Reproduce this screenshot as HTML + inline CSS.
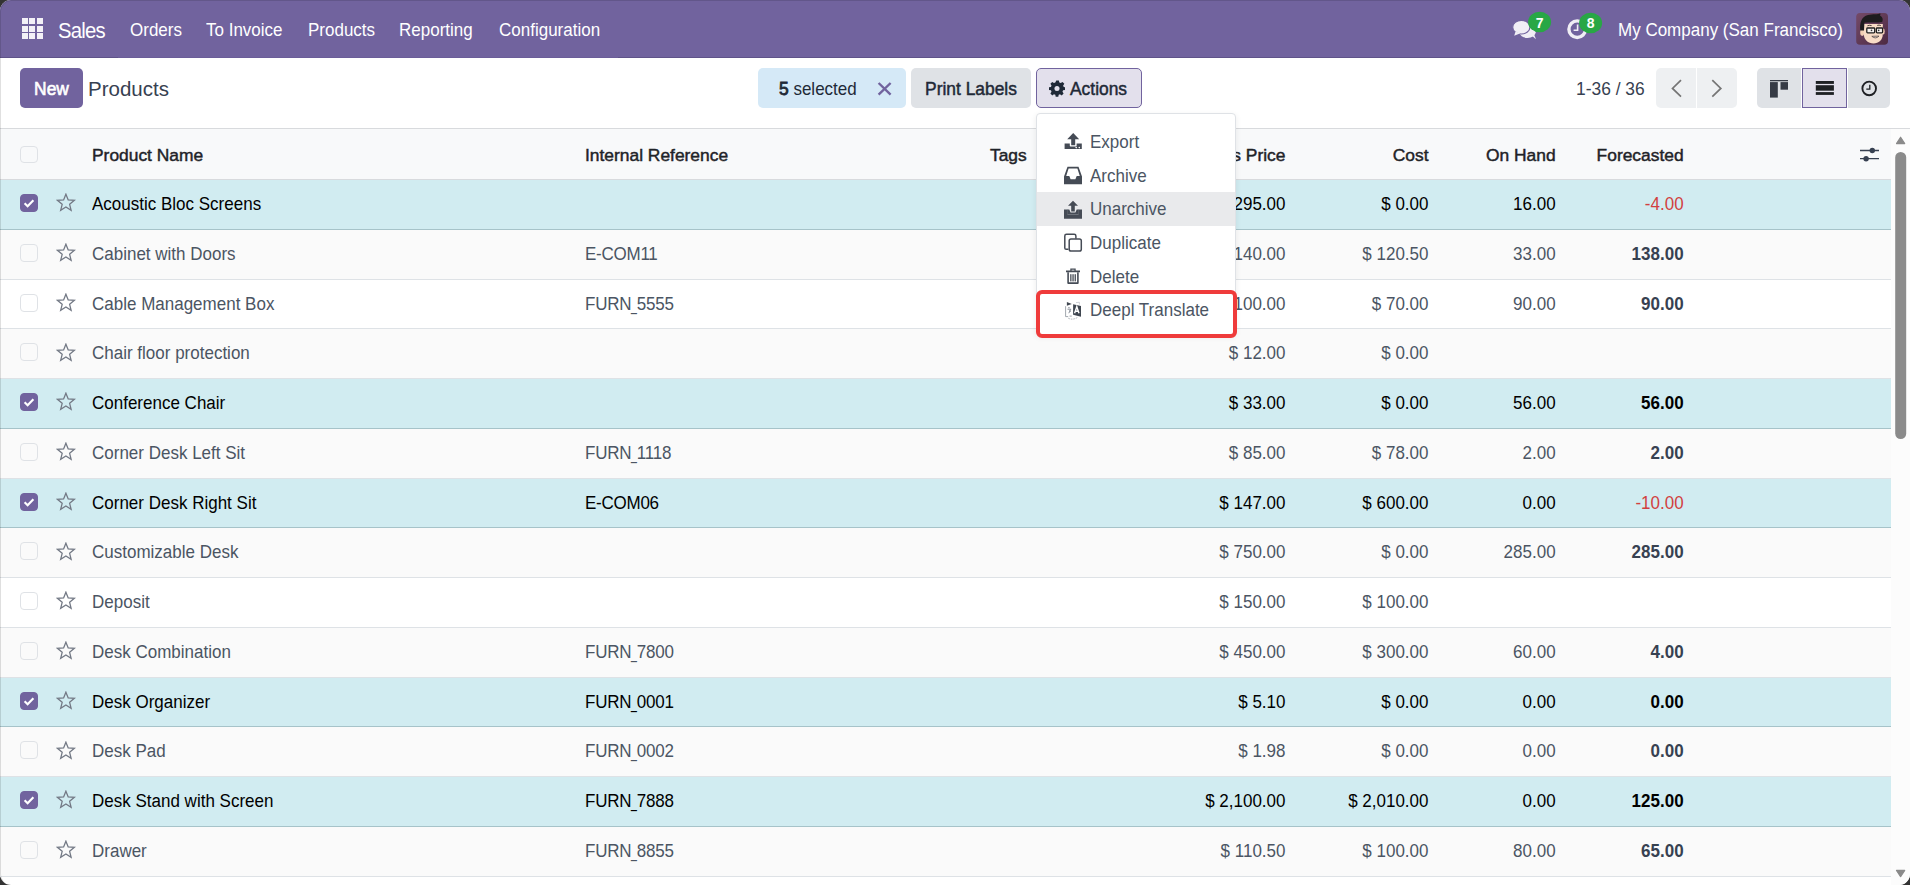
<!DOCTYPE html>
<html><head><meta charset="utf-8"><title>Products</title>
<style>
* { box-sizing: border-box; }
html, body { margin: 0; padding: 0; }
body { width: 1910px; height: 885px; overflow: hidden; background: #333; font-family: "Liberation Sans", sans-serif; position: relative; }
#win { position: absolute; left: 0; top: 0; width: 1910px; height: 885px; background: #fff; border-radius: 11px; overflow: hidden; }
.abs { position: absolute; }
/* navbar */
#nav { position: absolute; left: 0; top: 0; width: 1910px; height: 58px; background: #71639e; border-bottom: 1px solid #5f5389; }
#nav .t { position: absolute; top: 2px; line-height: 58px; color: #fff; font-size: 17px; white-space: nowrap; transform: scaleY(1.075); transform-origin: 0 50%; }
#nav .brand { font-size: 20.3px; letter-spacing: -0.8px; top: 0.5px; }
.grid { position: absolute; left: 21.5px; top: 18px; width: 22px; height: 21px; }
.grid i { position: absolute; width: 6.4px; height: 6px; background: #f3f1f7; }
.badge { position: absolute; width: 23px; height: 21px; border-radius: 11px; background: #28a745; color: #fff; font-size: 13px; font-weight: bold; text-align: center; line-height: 21px; }
/* control panel */
.btn { position: absolute; top: 68px; height: 40px; border-radius: 5px; font-size: 17px; line-height: 43px; white-space: nowrap; }
.sb { -webkit-text-stroke: 0.45px currentColor; font-size: 17.4px; }
#new { left: 20px; width: 63px; background: #71639e; color: #fff; text-align: center; -webkit-text-stroke: 0.6px #fff; font-size: 17.4px; }
#title { position: absolute; left: 88px; top: 68.5px; line-height: 40px; font-size: 20.5px; color: #374151; }
#selbox { left: 758px; width: 148px; background: #d5e9f7; color: #1f2937; }
#print { left: 911px; width: 120px; background: #dfe2e6; color: #1f2937; text-align: center; -webkit-text-stroke: 0.45px currentColor; font-size: 17.4px; }
#actions { left: 1036px; width: 106px; background: #e3e0ec; border: 1px solid #71639e; color: #1f2937; line-height: 41px; -webkit-text-stroke: 0.45px currentColor; font-size: 17.4px; }
#pager { position: absolute; left: 1576px; top: 69.3px; line-height: 40px; font-size: 17.4px; transform: scaleY(1.06); transform-origin: 0 50%; color: #374151; }
.pbtn { position: absolute; top: 68px; height: 40px; background: #eef0f2; }
.vbtn { position: absolute; top: 68px; height: 40px; background: #dfe2e6; }
/* table */
#thead { position: absolute; left: 0; top: 128px; width: 1891px; height: 52px; background: #f8f9fa; border-top: 1px solid #d8dadd; border-bottom: 1px solid #d8dadd; }
#thead .h { position: absolute; top: 1px; line-height: 50px; font-size: 17.4px; color: #1f2328; white-space: nowrap; -webkit-text-stroke: 0.45px currentColor; }
.row { position: absolute; left: 0; width: 1891px; height: 49.76px; background: #fff; border-bottom: 1px solid #dee2e6; }
.row.odd { background: #fafafa; }
.row.sel { background: #d1ecf1; border-bottom-color: #a6c3c9; }
.row .c { position: absolute; top: 0; line-height: 48.7px; font-size: 17px; color: #4b5563; white-space: nowrap; transform: scaleY(1.075); transform-origin: 0 17px; }
.row.sel .c { color: #000; }
.row .name { left: 92px; }
.row .ref { left: 585px; letter-spacing: -0.25px; }
.us { display: inline-block; transform: scaleX(0.62); transform-origin: 0 0; margin-right: -3.6px; }
.row .r { text-align: right; }
.row .price { right: 605.5px; }
.row .cost { right: 462.5px; }
.row .onhand { right: 335.4px; }
.row .fc { right: 207.4px; font-weight: bold; color: #374151; }
.row.sel .fc { color: #000; }
.row .fc.red, .row.sel .fc.red { color: #d23f3f; font-weight: normal; }
.cb { position: absolute; left: 20px; top: 14px; width: 18px; height: 18px; border: 1px solid #dfe2e6; border-radius: 4px; background: transparent; }
.cb.on { background: #71639e; border-color: #71639e; }
.cb.on svg { position: absolute; left: -1px; top: -1px; }
.star { position: absolute; left: 55.6px; top: 13.3px; }
/* scrollbar */
#sb { position: absolute; left: 1891px; top: 129px; width: 19px; height: 756px; background: #fcfcfc; }
#sbl { position: absolute; left: 1891px; top: 128px; width: 19px; height: 1px; background: #d8dadd; }
/* dropdown */
#dd { position: absolute; left: 1036px; top: 113px; width: 200px; height: 222px; background: #fff; border: 1px solid #dfe2e6; border-radius: 4px; box-shadow: 0 2px 6px rgba(0,0,0,0.08); }
.di { position: absolute; left: 0; width: 198px; height: 33.6px; line-height: 33.6px; font-size: 17px; color: #4b5563; white-space: nowrap; }
.di.hov { background: #e9eaec; }
.di span { position: absolute; left: 53px; top: 1px; transform: scaleY(1.075); transform-origin: 0 50%; }
.di svg { position: absolute; left: 27px; }
#redbox { position: absolute; left: 1036px; top: 290px; width: 201px; height: 48px; border: 4.5px solid #ef3b3b; border-radius: 6px; }

#lb { position: absolute; left: 0; top: 0; width: 1910px; height: 885px; border: 1px solid rgba(0,0,0,0.12); border-right: none; border-bottom: none; border-radius: 11px; }

.btn .tx { transform: scaleY(1.07); transform-origin: 0 27px; }

</style></head>
<body>
<div id="win">
 <div id="nav">
  <div class="grid">
   <i style="left:0;top:0"></i><i style="left:7.6px;top:0"></i><i style="left:15.2px;top:0"></i>
   <i style="left:0;top:7.5px"></i><i style="left:7.6px;top:7.5px"></i><i style="left:15.2px;top:7.5px"></i>
   <i style="left:0;top:15px"></i><i style="left:7.6px;top:15px"></i><i style="left:15.2px;top:15px"></i>
  </div>
  <div id="navl" style="position:absolute;left:118px;top:57px;width:500px;height:1px;background:#6b5d99"></div>
  <span class="t brand" style="left:58px">Sales</span>
  <span class="t" style="left:130px">Orders</span>
  <span class="t" style="left:206px">To Invoice</span>
  <span class="t" style="left:308px">Products</span>
  <span class="t" style="left:399px">Reporting</span>
  <span class="t" style="left:499px">Configuration</span>
  <span class="t" style="left:1618px">My Company (San Francisco)</span>
 </div>

 <div class="btn" id="new"><span class="tx" style="display:inline-block">New</span></div>
 <div id="title">Products</div>
 <div class="btn" id="selbox"><span class="tx" style="position:absolute;left:21px"><b class="sb" style="font-weight:normal;-webkit-text-stroke:0.8px currentColor">5</b> selected</span></div>
 <div class="btn" id="print"><span class="tx" style="display:inline-block">Print Labels</span></div>
 <div class="btn" id="actions"><span class="tx" style="position:absolute;left:33px">Actions</span></div>
 <div id="pager">1-36 / 36</div>
 <div class="pbtn" style="left:1656px;width:40px;border-radius:5px 0 0 5px"></div>
 <div class="pbtn" style="left:1697px;width:40px;border-radius:0 5px 5px 0"></div>
 <div class="vbtn" style="left:1757px;width:44px;border-radius:5px 0 0 5px"></div>
 <div class="vbtn" style="left:1802px;width:45px;background:#e3e0ec;border:1px solid #71639e"></div>
 <div class="vbtn" style="left:1848px;width:42px;border-radius:0 5px 5px 0"></div>

 <div id="thead">
  <div class="cb" style="top:16.5px;height:17.5px"></div>
  <span class="h" style="left:92px">Product Name</span>
  <span class="h" style="left:585px">Internal Reference</span>
  <span class="h" style="left:990px">Tags</span>
  <span class="h" style="right:605.5px">Sales Price</span>
  <span class="h" style="right:462.5px">Cost</span>
  <span class="h" style="right:335.4px">On Hand</span>
  <span class="h" style="right:207.4px">Forecasted</span>
 </div>
<div class="row sel" style="top:180px;height:49.76px"><div class="cb on"><svg viewBox="0 0 18 18" width="18" height="18"><path d="M4.6 9.3 L7.6 12.2 L13.4 6.2" fill="none" stroke="#fff" stroke-width="2.2" stroke-linecap="butt"/></svg></div><svg class="star" viewBox="0 0 20 20" width="20" height="20"><path d="M9.90 1.20 L12.20 6.93 L18.36 7.35 L13.62 11.31 L15.13 17.30 L9.90 14.02 L4.67 17.30 L6.18 11.31 L1.44 7.35 L7.60 6.93 Z" fill="none" stroke="#737985" stroke-width="1.3" stroke-linejoin="miter"/></svg><span class="c name">Acoustic Bloc Screens</span><span class="c r price">$ 295.00</span><span class="c r cost">$ 0.00</span><span class="c r onhand">16.00</span><span class="c r fc red">-4.00</span></div>
<div class="row odd" style="top:229.76px"><div class="cb"></div><svg class="star" viewBox="0 0 20 20" width="20" height="20"><path d="M9.90 1.20 L12.20 6.93 L18.36 7.35 L13.62 11.31 L15.13 17.30 L9.90 14.02 L4.67 17.30 L6.18 11.31 L1.44 7.35 L7.60 6.93 Z" fill="none" stroke="#737985" stroke-width="1.3" stroke-linejoin="miter"/></svg><span class="c name">Cabinet with Doors</span><span class="c ref">E-COM11</span><span class="c r price">$ 140.00</span><span class="c r cost">$ 120.50</span><span class="c r onhand">33.00</span><span class="c r fc">138.00</span></div>
<div class="row" style="top:279.52px"><div class="cb"></div><svg class="star" viewBox="0 0 20 20" width="20" height="20"><path d="M9.90 1.20 L12.20 6.93 L18.36 7.35 L13.62 11.31 L15.13 17.30 L9.90 14.02 L4.67 17.30 L6.18 11.31 L1.44 7.35 L7.60 6.93 Z" fill="none" stroke="#737985" stroke-width="1.3" stroke-linejoin="miter"/></svg><span class="c name">Cable Management Box</span><span class="c ref">FURN<span class="us">_</span>5555</span><span class="c r price">$ 100.00</span><span class="c r cost">$ 70.00</span><span class="c r onhand">90.00</span><span class="c r fc">90.00</span></div>
<div class="row odd" style="top:329.28px"><div class="cb"></div><svg class="star" viewBox="0 0 20 20" width="20" height="20"><path d="M9.90 1.20 L12.20 6.93 L18.36 7.35 L13.62 11.31 L15.13 17.30 L9.90 14.02 L4.67 17.30 L6.18 11.31 L1.44 7.35 L7.60 6.93 Z" fill="none" stroke="#737985" stroke-width="1.3" stroke-linejoin="miter"/></svg><span class="c name">Chair floor protection</span><span class="c r price">$ 12.00</span><span class="c r cost">$ 0.00</span></div>
<div class="row sel" style="top:379.04px"><div class="cb on"><svg viewBox="0 0 18 18" width="18" height="18"><path d="M4.6 9.3 L7.6 12.2 L13.4 6.2" fill="none" stroke="#fff" stroke-width="2.2" stroke-linecap="butt"/></svg></div><svg class="star" viewBox="0 0 20 20" width="20" height="20"><path d="M9.90 1.20 L12.20 6.93 L18.36 7.35 L13.62 11.31 L15.13 17.30 L9.90 14.02 L4.67 17.30 L6.18 11.31 L1.44 7.35 L7.60 6.93 Z" fill="none" stroke="#737985" stroke-width="1.3" stroke-linejoin="miter"/></svg><span class="c name">Conference Chair</span><span class="c r price">$ 33.00</span><span class="c r cost">$ 0.00</span><span class="c r onhand">56.00</span><span class="c r fc">56.00</span></div>
<div class="row odd" style="top:428.80px"><div class="cb"></div><svg class="star" viewBox="0 0 20 20" width="20" height="20"><path d="M9.90 1.20 L12.20 6.93 L18.36 7.35 L13.62 11.31 L15.13 17.30 L9.90 14.02 L4.67 17.30 L6.18 11.31 L1.44 7.35 L7.60 6.93 Z" fill="none" stroke="#737985" stroke-width="1.3" stroke-linejoin="miter"/></svg><span class="c name">Corner Desk Left Sit</span><span class="c ref">FURN<span class="us">_</span>1118</span><span class="c r price">$ 85.00</span><span class="c r cost">$ 78.00</span><span class="c r onhand">2.00</span><span class="c r fc">2.00</span></div>
<div class="row sel" style="top:478.56px"><div class="cb on"><svg viewBox="0 0 18 18" width="18" height="18"><path d="M4.6 9.3 L7.6 12.2 L13.4 6.2" fill="none" stroke="#fff" stroke-width="2.2" stroke-linecap="butt"/></svg></div><svg class="star" viewBox="0 0 20 20" width="20" height="20"><path d="M9.90 1.20 L12.20 6.93 L18.36 7.35 L13.62 11.31 L15.13 17.30 L9.90 14.02 L4.67 17.30 L6.18 11.31 L1.44 7.35 L7.60 6.93 Z" fill="none" stroke="#737985" stroke-width="1.3" stroke-linejoin="miter"/></svg><span class="c name">Corner Desk Right Sit</span><span class="c ref">E-COM06</span><span class="c r price">$ 147.00</span><span class="c r cost">$ 600.00</span><span class="c r onhand">0.00</span><span class="c r fc red">-10.00</span></div>
<div class="row odd" style="top:528.32px"><div class="cb"></div><svg class="star" viewBox="0 0 20 20" width="20" height="20"><path d="M9.90 1.20 L12.20 6.93 L18.36 7.35 L13.62 11.31 L15.13 17.30 L9.90 14.02 L4.67 17.30 L6.18 11.31 L1.44 7.35 L7.60 6.93 Z" fill="none" stroke="#737985" stroke-width="1.3" stroke-linejoin="miter"/></svg><span class="c name">Customizable Desk</span><span class="c r price">$ 750.00</span><span class="c r cost">$ 0.00</span><span class="c r onhand">285.00</span><span class="c r fc">285.00</span></div>
<div class="row" style="top:578.08px"><div class="cb"></div><svg class="star" viewBox="0 0 20 20" width="20" height="20"><path d="M9.90 1.20 L12.20 6.93 L18.36 7.35 L13.62 11.31 L15.13 17.30 L9.90 14.02 L4.67 17.30 L6.18 11.31 L1.44 7.35 L7.60 6.93 Z" fill="none" stroke="#737985" stroke-width="1.3" stroke-linejoin="miter"/></svg><span class="c name">Deposit</span><span class="c r price">$ 150.00</span><span class="c r cost">$ 100.00</span></div>
<div class="row odd" style="top:627.84px"><div class="cb"></div><svg class="star" viewBox="0 0 20 20" width="20" height="20"><path d="M9.90 1.20 L12.20 6.93 L18.36 7.35 L13.62 11.31 L15.13 17.30 L9.90 14.02 L4.67 17.30 L6.18 11.31 L1.44 7.35 L7.60 6.93 Z" fill="none" stroke="#737985" stroke-width="1.3" stroke-linejoin="miter"/></svg><span class="c name">Desk Combination</span><span class="c ref">FURN<span class="us">_</span>7800</span><span class="c r price">$ 450.00</span><span class="c r cost">$ 300.00</span><span class="c r onhand">60.00</span><span class="c r fc">4.00</span></div>
<div class="row sel" style="top:677.60px"><div class="cb on"><svg viewBox="0 0 18 18" width="18" height="18"><path d="M4.6 9.3 L7.6 12.2 L13.4 6.2" fill="none" stroke="#fff" stroke-width="2.2" stroke-linecap="butt"/></svg></div><svg class="star" viewBox="0 0 20 20" width="20" height="20"><path d="M9.90 1.20 L12.20 6.93 L18.36 7.35 L13.62 11.31 L15.13 17.30 L9.90 14.02 L4.67 17.30 L6.18 11.31 L1.44 7.35 L7.60 6.93 Z" fill="none" stroke="#737985" stroke-width="1.3" stroke-linejoin="miter"/></svg><span class="c name">Desk Organizer</span><span class="c ref">FURN<span class="us">_</span>0001</span><span class="c r price">$ 5.10</span><span class="c r cost">$ 0.00</span><span class="c r onhand">0.00</span><span class="c r fc">0.00</span></div>
<div class="row odd" style="top:727.36px"><div class="cb"></div><svg class="star" viewBox="0 0 20 20" width="20" height="20"><path d="M9.90 1.20 L12.20 6.93 L18.36 7.35 L13.62 11.31 L15.13 17.30 L9.90 14.02 L4.67 17.30 L6.18 11.31 L1.44 7.35 L7.60 6.93 Z" fill="none" stroke="#737985" stroke-width="1.3" stroke-linejoin="miter"/></svg><span class="c name">Desk Pad</span><span class="c ref">FURN<span class="us">_</span>0002</span><span class="c r price">$ 1.98</span><span class="c r cost">$ 0.00</span><span class="c r onhand">0.00</span><span class="c r fc">0.00</span></div>
<div class="row sel" style="top:777.12px"><div class="cb on"><svg viewBox="0 0 18 18" width="18" height="18"><path d="M4.6 9.3 L7.6 12.2 L13.4 6.2" fill="none" stroke="#fff" stroke-width="2.2" stroke-linecap="butt"/></svg></div><svg class="star" viewBox="0 0 20 20" width="20" height="20"><path d="M9.90 1.20 L12.20 6.93 L18.36 7.35 L13.62 11.31 L15.13 17.30 L9.90 14.02 L4.67 17.30 L6.18 11.31 L1.44 7.35 L7.60 6.93 Z" fill="none" stroke="#737985" stroke-width="1.3" stroke-linejoin="miter"/></svg><span class="c name">Desk Stand with Screen</span><span class="c ref">FURN<span class="us">_</span>7888</span><span class="c r price">$ 2,100.00</span><span class="c r cost">$ 2,010.00</span><span class="c r onhand">0.00</span><span class="c r fc">125.00</span></div>
<div class="row odd" style="top:826.88px"><div class="cb"></div><svg class="star" viewBox="0 0 20 20" width="20" height="20"><path d="M9.90 1.20 L12.20 6.93 L18.36 7.35 L13.62 11.31 L15.13 17.30 L9.90 14.02 L4.67 17.30 L6.18 11.31 L1.44 7.35 L7.60 6.93 Z" fill="none" stroke="#737985" stroke-width="1.3" stroke-linejoin="miter"/></svg><span class="c name">Drawer</span><span class="c ref">FURN<span class="us">_</span>8855</span><span class="c r price">$ 110.50</span><span class="c r cost">$ 100.00</span><span class="c r onhand">80.00</span><span class="c r fc">65.00</span></div>
 <div id="sb"></div><div id="sbl"></div>

 <div id="dd">
  <div class="di" style="top:11px"><span>Export</span></div>
  <div class="di" style="top:44.6px"><span>Archive</span></div>
  <div class="di hov" style="top:78.4px"><span>Unarchive</span></div>
  <div class="di" style="top:112px"><span>Duplicate</span></div>
  <div class="di" style="top:145.6px"><span>Delete</span></div>
  <div class="di" style="top:179.2px"><span>Deepl Translate</span></div>
 </div>
 <svg id="ov" width="1910" height="885" viewBox="0 0 1910 885" style="position:absolute;left:0;top:0;pointer-events:none">
 <!-- navbar chat icon -->
 <g fill="#f0eef5">
  <ellipse cx="1527.5" cy="32.3" rx="8.2" ry="5.6"/>
  <path d="M1531 35 L1536 39.3 L1533.5 33 Z"/>
 </g>
 <g fill="#f0eef5" stroke="#71639e" stroke-width="1.2">
  <ellipse cx="1521.3" cy="27.2" rx="8.6" ry="6.8"/>
 </g>
 <path d="M1515.5 31.5 L1514.2 35.8 L1520.5 33.2 Z" fill="#f0eef5"/>
 <ellipse cx="1539.6" cy="22" rx="11.5" ry="10.3" fill="#28a745"/>
 <text x="1539.6" y="28" font-family="Liberation Sans" font-size="14" font-weight="bold" fill="#fff" text-anchor="middle">7</text>
 <!-- clock -->
 <circle cx="1577.2" cy="29.2" r="8.3" fill="none" stroke="#f0eef5" stroke-width="3.4"/>
 <path d="M1577.6 24.6 V30.2 H1573.6" fill="none" stroke="#f0eef5" stroke-width="1.6"/>
 <ellipse cx="1590.6" cy="23" rx="11.5" ry="10.3" fill="#28a745"/>
 <text x="1590.6" y="28" font-family="Liberation Sans" font-size="14" font-weight="bold" fill="#fff" text-anchor="middle">8</text>
 <!-- avatar -->
 <defs>
  <linearGradient id="avg" x1="0" y1="0" x2="1" y2="1"><stop offset="0" stop-color="#744a68"/><stop offset="1" stop-color="#4d2b43"/></linearGradient>
 </defs>
 <rect x="1856.2" y="13" width="31.8" height="31.8" rx="3.8" fill="url(#avg)"/>
 <ellipse cx="1862.2" cy="32.6" rx="2" ry="3.3" fill="#f3cfb4"/>
 <ellipse cx="1883.3" cy="31.5" rx="1.4" ry="3" fill="#f3cfb4"/>
 <path d="M1863.6 24 H1882.8 V34 C1882.8 40 1878.5 43.5 1873.6 43.5 C1868 43.5 1863.6 39.5 1863.6 33 Z" fill="#f8dcc6"/>
 <path d="M1860.3 30.5 C1859.4 23 1861.5 16.5 1868 15 C1873 13.9 1878 14.6 1880.2 13.2 C1880.6 14.3 1880.3 15.2 1880 15.6 C1882.6 16.8 1883.4 19.6 1882.2 22 C1877 22.8 1870 22.3 1864.4 22.8 L1864 30.6 Z" fill="#1d1c1e"/>
 <path d="M1867.4 25.8 Q1869.5 24.9 1871.6 25.6 M1877.2 25.4 Q1879.2 24.7 1880.8 25.6" fill="none" stroke="#3a3030" stroke-width="0.9"/>
 <rect x="1866.8" y="28" width="7.9" height="4.8" rx="0.8" fill="#f4efec" stroke="#1f1f1f" stroke-width="1.3"/>
 <rect x="1876.4" y="28" width="6.2" height="4.8" rx="0.8" fill="#f4efec" stroke="#1f1f1f" stroke-width="1.3"/>
 <circle cx="1871.5" cy="30.4" r="0.8" fill="#333"/>
 <circle cx="1878.7" cy="30.4" r="0.8" fill="#333"/>
 <path d="M1871.8 36.3 Q1875.5 39.6 1879 36.1 Z" fill="#dcd6d2" stroke="#4a3a36" stroke-width="0.7"/>
 <!-- X in selection box -->
 <path d="M878.6 83 L890.6 94.6 M890.6 83 L878.6 94.6" stroke="#71639e" stroke-width="2.4"/>
 <!-- gear -->
 <g transform="translate(1057,88.6) scale(0.93)">
  <path fill="#1f2937" d="M-1.4 -7.8 H1.4 L1.9 -5.6 L3.4 -5 L5.3 -6.3 L7.3 -4.3 L6 -2.4 L6.6 -0.9 L8 -0.5 V2.3 L5.9 2.8 L5.3 4.2 L6.5 6.2 L4.5 8.2 L2.6 6.9 L1.2 7.5 L0.8 9.6 H-2 L-2.4 7.5 L-3.9 6.9 L-5.7 8.2 L-7.7 6.2 L-6.5 4.3 L-7.1 2.8 L-9.2 2.3 V-0.5 L-7.1 -0.9 L-6.5 -2.4 L-7.7 -4.3 L-5.7 -6.3 L-3.9 -5 L-2.4 -5.6 Z" transform="translate(0.6,-0.9)"/>
  <circle cx="0" cy="0" r="2.7" fill="#e3e0ec"/>
 </g>
 <!-- pager chevrons -->
 <path d="M1681 80.2 L1672.5 88.4 L1681 96.6" fill="none" stroke="#757575" stroke-width="1.7"/>
 <path d="M1712.3 80.2 L1720.8 88.4 L1712.3 96.6" fill="none" stroke="#757575" stroke-width="1.7"/>
 <!-- kanban -->
 <g fill="#353a44">
  <rect x="1770" y="80" width="18" height="1.3"/>
  <rect x="1770" y="82.1" width="7.8" height="15.5"/>
  <rect x="1780.5" y="82.1" width="7.5" height="7.6"/>
 </g>
 <!-- list -->
 <g fill="#1e2024">
  <rect x="1815.8" y="81" width="18.1" height="2.9"/>
  <rect x="1815.8" y="85.2" width="18.1" height="5.5"/>
  <rect x="1815.8" y="92.1" width="18.1" height="2.8"/>
 </g>
 <!-- activity clock -->
 <circle cx="1869.2" cy="88.4" r="6.8" fill="none" stroke="#1e2024" stroke-width="1.9"/>
 <path d="M1869.8 84.8 V89.2 H1866.3" fill="none" stroke="#1e2024" stroke-width="1.3"/>
 <!-- settings sliders -->
 <g stroke="#374151" stroke-width="1.3" fill="#374151">
  <path d="M1860 150.5 H1879 M1860 158.7 H1879"/>
  <circle cx="1872.3" cy="150.5" r="2.7" stroke="none"/>
  <circle cx="1866.1" cy="158.7" r="2.7" stroke="none"/>
 </g>
 <!-- scrollbar -->
 <path d="M1896.5 143.6 L1900.6 137.2 L1904.7 143.6 Z" fill="#8a8a8a" stroke="#8a8a8a" stroke-width="1.2" stroke-linejoin="round"/>
 <rect x="1895.2" y="152" width="11" height="287" rx="5.5" fill="#8a8a8a"/>
 <path d="M1896.5 870.4 L1900.6 876.6 L1904.7 870.4 Z" fill="#8a8a8a" stroke="#8a8a8a" stroke-width="1.2" stroke-linejoin="round"/>

 <!-- dropdown icons -->
 <g fill="#454b55">
  <!-- export -->
  <path d="M1073.2 133 L1079.2 139.3 H1075.2 V145.2 H1071.2 V139.3 H1067.2 Z"/>
  <path d="M1064.6 143.6 H1069.8 V145.8 Q1069.8 146.6 1070.6 146.6 H1075.8 Q1076.6 146.6 1076.6 145.8 V143.6 H1081.8 V149 H1064.6 Z"/>
  <!-- archive -->
  <path d="M1067.5 166.8 H1078.5 L1082 176.5 V184.3 H1064 V176.5 Z M1068.6 168.6 L1066.2 176 H1069.3 L1070.6 179.2 H1075.4 L1076.7 176 H1079.8 L1077.4 168.6 Z"/>
  <!-- unarchive -->
  <path d="M1064 209.5 H1067.5 V214.5 H1078.5 V209.5 H1082 V218.8 H1064 Z"/>
  <path d="M1067.2 209.5 L1069.3 209.5 L1070.6 212.6 H1075.4 L1076.7 209.5 L1078.8 209.5 V214.5 H1067.2 Z"/>
  <path d="M1073 200.7 L1078 205.8 H1074.8 V211.5 H1071.2 V205.8 H1068 Z"/>
  <!-- trash -->
  <path d="M1070.3 268.6 H1075.7 V270.6 H1080 V272.2 H1066 V270.6 H1070.3 Z M1071.6 269.8 V270.6 H1074.4 V269.8 Z"/>
  <path d="M1067.3 272.2 H1068.9 V282.3 H1077.1 V272.2 H1078.7 V283 Q1078.7 284 1077.7 284 H1068.3 Q1067.3 284 1067.3 283 Z"/>
  <rect x="1070.2" y="274.2" width="1.3" height="7.2"/>
  <rect x="1072.4" y="274.2" width="1.3" height="7.2"/>
  <rect x="1074.6" y="274.2" width="1.3" height="7.2"/>
 </g>
 <g fill="#fff"><circle cx="1076.2" cy="147.6" r="0.8"/><circle cx="1079.3" cy="147.6" r="0.8"/></g>
 <!-- duplicate -->
 <g fill="none" stroke="#454b55" stroke-width="1.5">
  <path d="M1068.4 249.3 H1066.2 Q1064.8 249.3 1064.8 247.9 V236 Q1064.8 234.3 1066.5 234.3 H1074.2 Q1075.9 234.3 1075.9 236 V238.8"/>
  <rect x="1069.2" y="239" width="12.1" height="12" rx="1.8"/>
 </g>
 <!-- deepl translate -->
 <g>
  <path d="M1066.9 302 L1071.8 303.9 L1066.9 305.7 Z" fill="#3f4650"/>
  <path d="M1065.6 306.2 V316.6 H1068.2 M1069.5 316.1 H1071.8" fill="none" stroke="#8a9099" stroke-width="0.8"/>
  <path d="M1068.3 307.6 H1069.6 M1067.5 309.2 H1070.8 L1068.8 313.2 M1069.4 310.6 L1070.7 311.6" fill="none" stroke="#6b7280" stroke-width="0.8"/>
  <path d="M1073.1 304.2 L1081 306 V316.8 L1073.1 314.8 Z" fill="#3f4650"/>
  <path d="M1074.6 313.3 L1076.8 306.8 L1079 313.3 M1075.4 311.2 H1078.2" fill="none" stroke="#fff" stroke-width="1.4"/>
  <path d="M1076 302.6 L1079.4 302.3 V304.6" fill="none" stroke="#c4c8ce" stroke-width="0.8"/>
  <path d="M1068.3 318.2 Q1072.5 320.4 1077.6 317.4" fill="none" stroke="#9aa0a6" stroke-width="0.8" stroke-dasharray="1.6 1"/>
 </g>
</svg>

 <div id="lb"></div>
 <div id="redbox"></div>
</div>

</body></html>
